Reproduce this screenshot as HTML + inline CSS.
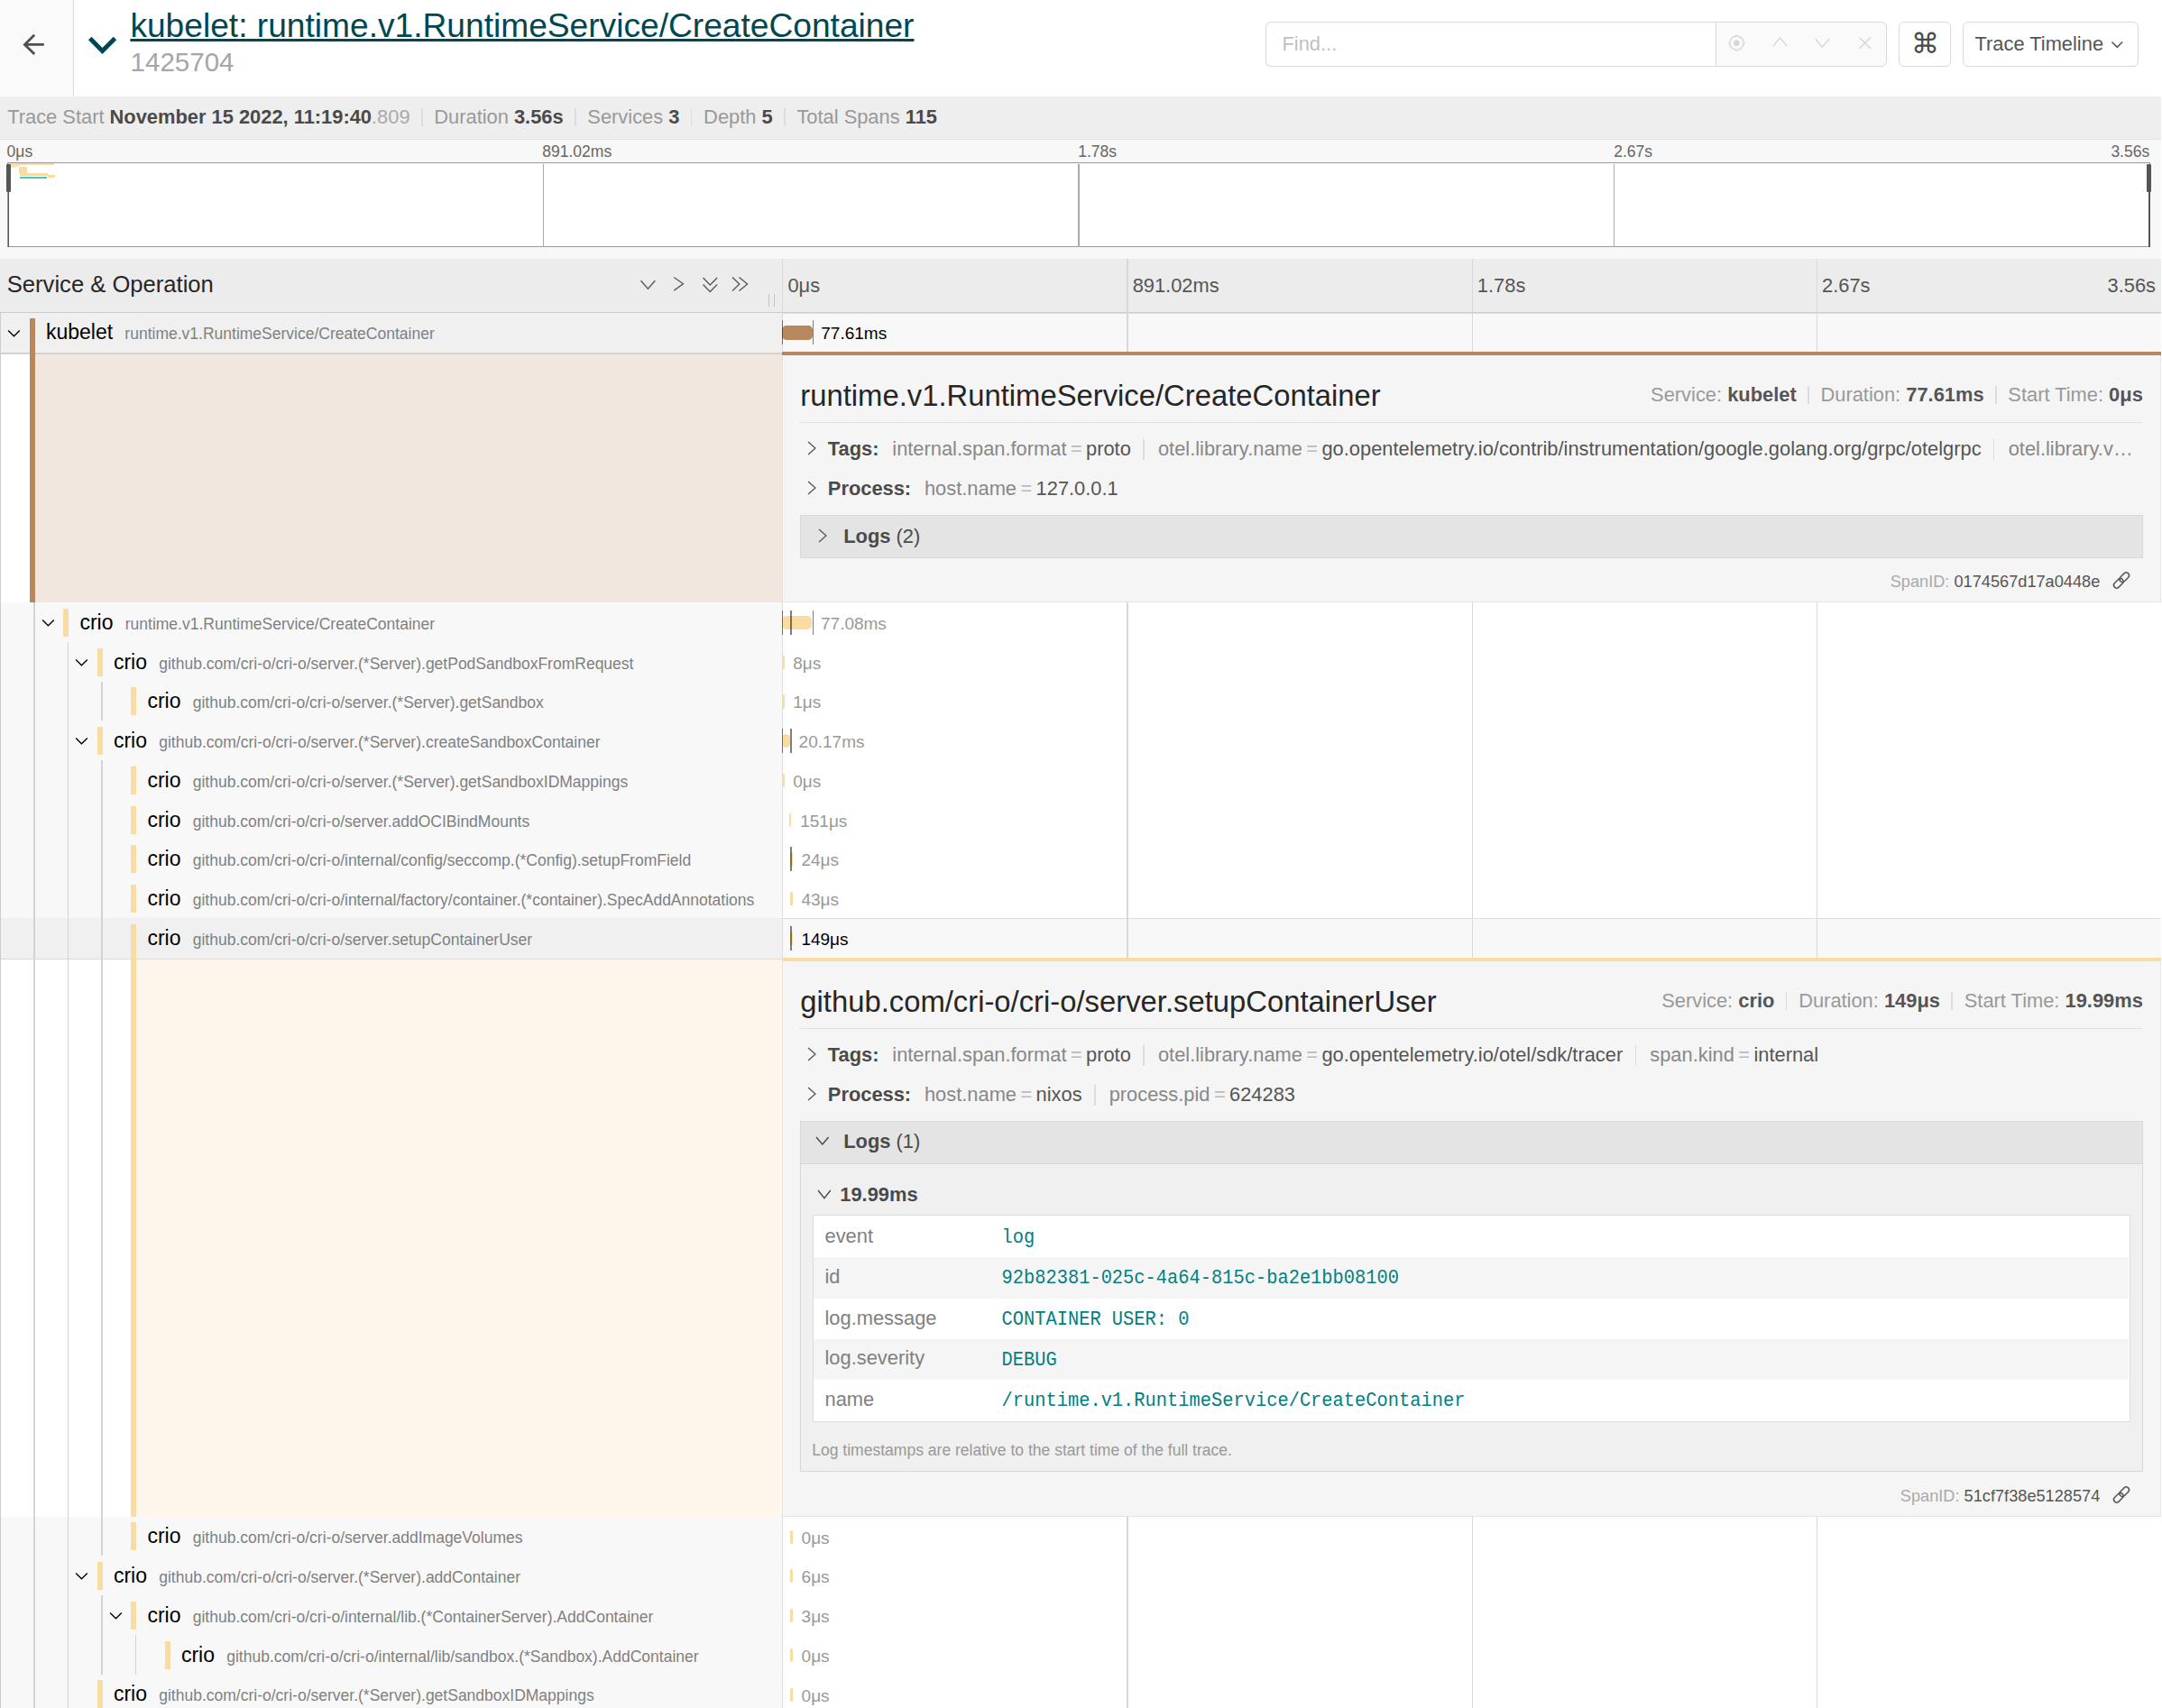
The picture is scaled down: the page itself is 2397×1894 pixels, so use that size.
<!DOCTYPE html><html><head><meta charset="utf-8"><style>
*{margin:0;padding:0;box-sizing:content-box}
html,body{width:2397px;height:1894px;overflow:hidden;background:#fff}
body{position:relative;font-family:"Liberation Sans",sans-serif}
.a{position:absolute}
.t{position:absolute;white-space:nowrap;line-height:normal}
.li{display:inline-block;color:#4a4a4a}
.dv{display:inline-block;width:1.5px;height:0.9em;background:#ddd;vertical-align:middle;position:relative;top:-0.06em;margin:0 12.7px 0 12.5px}
.li .lb{color:#999}
.li b{color:#4a4a4a}
.li .ms{color:#aaa}
.oi{display:inline-block}
.dv2{display:inline-block;width:1.5px;height:0.9em;background:#ddd;vertical-align:middle;position:relative;top:-0.06em;margin:0 12.8px 0 12.5px}
.oi .lb2{color:#999}
.oi b{color:#555}
.sum{color:#888}
.sum .lbl{color:#4a4a4a;margin-right:14.8px}
.sum .si{color:#888}
.sum .sep{display:inline-block;width:1.5px;height:23px;background:#ddd;vertical-align:-5px;margin:0 15.2px 0 13.4px}
.sum .dl{color:#bbb;padding:0 4.4px}
.sum .sv{color:#555}
</style></head><body>
<div class="a" style="left:0px;top:0px;width:2396px;height:107px;background:#fff;"></div>
<div class="a" style="left:0px;top:0px;width:81px;height:107px;background:#fafafa;"></div>
<div class="a" style="left:81px;top:0px;width:1px;height:107px;background:#ddd;"></div>
<svg class="a" style="left:0px;top:0px;" width="81" height="107" viewBox="0 0 81 107"><path d="M38.2 38.7 L27.4 49.4 L38.2 60.1 M27.4 49.4 H48.8" fill="none" stroke="#4f4f4f" stroke-width="2.8" stroke-linejoin="miter"/></svg>
<svg class="a" style="left:90px;top:30px;" width="45" height="40" viewBox="0 0 45 40"><polygon points="7.96,14.2 11.5,10.7 23.5,23.1 35.7,10.7 39.2,14.2 23.5,30" fill="#004750"/></svg>
<span class="t" style="left:144.4px;top:6.82px;font-size:37.15px;color:#004750;font-weight:normal;font-family:'Liberation Sans', sans-serif;text-decoration:underline;">kubelet: runtime.v1.RuntimeService/CreateContainer</span>
<span class="t" style="left:144.6px;top:51.76px;font-size:29.5px;color:#a6a6a6;font-weight:normal;font-family:'Liberation Sans', sans-serif;">1425704</span>
<div class="a" style="left:1403.3px;top:24.2px;width:498.4px;height:49.8px;background:#fff;box-sizing:border-box;border:1px solid #d9d9d9;border-right:none;border-radius:6px 0 0 6px;"></div>
<span class="t" style="left:1421.5px;top:36.08px;font-size:21.875px;color:#bfbfbf;font-weight:normal;font-family:'Liberation Sans', sans-serif;">Find...</span>
<div class="a" style="left:1901.7px;top:24.2px;width:190px;height:49.8px;background:#fafafa;box-sizing:border-box;border:1px solid #d9d9d9;border-radius:0 6px 6px 0;"></div>
<svg class="a" style="left:1902px;top:24px;" width="190" height="50" viewBox="0 0 190 50"><g fill="none" stroke="#d6d6d6" stroke-width="1.4"><circle cx="23.4" cy="23.7" r="7.7"/><path d="M23.4 14.6V16.4 M23.4 31V32.9 M14.3 23.7H16.1 M30.7 23.7H32.6"/><path d="M63.9 27.4 L71.5 17.9 L79.2 27.4"/><path d="M110.6 19.2 L118.3 28.2 L126 19.2"/><path d="M159.3 17.4 L172 30 M172 17.4 L159.3 30"/></g><circle cx="23.4" cy="23.7" r="3.3" fill="#d6d6d6"/></svg>
<div class="a" style="left:2105.3px;top:24.2px;width:57.3px;height:49.8px;background:#fff;box-sizing:border-box;border:1px solid #d9d9d9;border-radius:6px;"></div>
<span class="t" style="left:2134.5px;top:31.04px;font-size:30.5px;color:#4a4a4a;font-weight:normal;font-family:'Liberation Sans', sans-serif;transform:translateX(-50%);">&#8984;</span>
<div class="a" style="left:2175.6px;top:24.2px;width:195.1px;height:49.8px;background:#fff;box-sizing:border-box;border:1px solid #d9d9d9;border-radius:6px;"></div>
<span class="t" style="left:2189.5px;top:35.98px;font-size:21.875px;color:#555;font-weight:normal;font-family:'Liberation Sans', sans-serif;">Trace Timeline</span>
<svg class="a" style="left:2336px;top:37.5px;" width="22" height="22" viewBox="0 0 22 22"><path d="M5.5 8.5 L11.3 14.3 L17.1 8.5" fill="none" stroke="#555" stroke-width="1.6"/></svg>
<div class="a" style="left:0px;top:107px;width:2396px;height:47.5px;background:#eeeeee;"></div>
<div class="a" style="left:0px;top:153.5px;width:2396px;height:1px;background:#e4e4e4;"></div>
<div class="t" style="left:8.2px;top:116.88px;font-size:21.875px;font-family:'Liberation Sans', sans-serif"><span class="li"><span class="lb">Trace Start</span> <b>November 15 2022, 11:19:40</b><span class="ms">.809</span></span><span class="dv"></span><span class="li"><span class="lb">Duration</span> <b>3.56s</b></span><span class="dv"></span><span class="li"><span class="lb">Services</span> <b>3</b></span><span class="dv"></span><span class="li"><span class="lb">Depth</span> <b>5</b></span><span class="dv"></span><span class="li"><span class="lb">Total Spans</span> <b>115</b></span></div>
<div class="a" style="left:0px;top:154.5px;width:2396px;height:132.5px;background:#f8f8f8;"></div>
<span class="t" style="left:7.6px;top:158.10px;font-size:17.5px;color:#666;font-weight:normal;font-family:'Liberation Sans', sans-serif;">0&#956;s</span>
<span class="t" style="left:601.3px;top:158.10px;font-size:17.5px;color:#666;font-weight:normal;font-family:'Liberation Sans', sans-serif;">891.02ms</span>
<span class="t" style="left:1195.2px;top:158.10px;font-size:17.5px;color:#666;font-weight:normal;font-family:'Liberation Sans', sans-serif;">1.78s</span>
<span class="t" style="left:1789.2px;top:158.10px;font-size:17.5px;color:#666;font-weight:normal;font-family:'Liberation Sans', sans-serif;">2.67s</span>
<span class="t" style="right:13.800000000000182px;top:158.10px;font-size:17.5px;color:#666;font-weight:normal;font-family:'Liberation Sans', sans-serif;">3.56s</span>
<div class="a" style="left:8px;top:180.2px;width:2375.6px;height:93.8px;background:#fff;box-sizing:border-box;border:1px solid #999;"></div>
<div class="a" style="left:601.6px;top:181.5px;width:1.5px;height:92px;background:#aaa;"></div>
<div class="a" style="left:1195.1px;top:181.5px;width:1.5px;height:92px;background:#aaa;"></div>
<div class="a" style="left:1788.6px;top:181.5px;width:1.5px;height:92px;background:#aaa;"></div>
<div class="a" style="left:8.7px;top:181.1px;width:51.2px;height:1.6px;background:#f8dca1;"></div>
<div class="a" style="left:12px;top:182.6px;width:9.3px;height:2.8px;background:#f9e3b5;"></div>
<div class="a" style="left:12px;top:185.2px;width:4.5px;height:1px;background:#f9e3b5;"></div>
<div class="a" style="left:21.3px;top:185.2px;width:8.3px;height:7.2px;background:#f8dca1;"></div>
<div class="a" style="left:21.7px;top:192.1px;width:31.1px;height:2.7px;background:#f8dca1;"></div>
<div class="a" style="left:52.8px;top:194.1px;width:8.5px;height:2.9px;background:#f8dca1;"></div>
<div class="a" style="left:21.7px;top:196px;width:30.3px;height:1.9px;background:rgba(23,184,190,0.8);"></div>
<div class="a" style="left:8.6px;top:181.5px;width:1.8px;height:92px;background:#555;"></div>
<div class="a" style="left:7.2px;top:181.5px;width:4.7px;height:31.2px;background:#555;border-radius:1px;"></div>
<div class="a" style="left:2381.9px;top:181.5px;width:1.8px;height:92px;background:#555;"></div>
<div class="a" style="left:2380.2px;top:182px;width:4.6px;height:30.8px;background:#555;border-radius:1px;"></div>
<div class="a" style="left:0px;top:287px;width:2396px;height:59.5px;background:#ececec;"></div>
<div class="a" style="left:0px;top:345.5px;width:2396px;height:1px;background:#ccc;"></div>
<div class="a" style="left:867.2px;top:287px;width:1px;height:59.5px;background:#d8d8d8;"></div>
<span class="t" style="left:7.8px;top:300.95px;font-size:25.6px;color:#262626;font-weight:normal;font-family:'Liberation Sans', sans-serif;">Service &amp; Operation</span>
<svg class="a" style="left:700px;top:297px;" width="140" height="45" viewBox="0 0 140 45"><path d="M10.5 14.3 L18.4 23.2 L26.3 14.3" fill="none" stroke="#5a5a5a" stroke-width="1.4"/><path d="M47.2 10.5 L57.4 17.8 L47.2 25.1" fill="none" stroke="#5a5a5a" stroke-width="1.4"/><path d="M79.5 11 L87.3 19 L95.1 11 M79.5 18.6 L87.3 26.6 L95.1 18.6" fill="none" stroke="#5a5a5a" stroke-width="1.4"/><path d="M112 10.5 L119.8 18 L112 25.5 M119.5 10.5 L128.6 18 L119.5 25.5" fill="none" stroke="#5a5a5a" stroke-width="1.4"/><path d="M152.5 29.5 V42.8 M158.4 29.5 V42.8" stroke="#bbb" stroke-width="1"/></svg>
<div class="a" style="left:852px;top:326.3px;width:1px;height:13.5px;background:#c4c4c4;"></div>
<div class="a" style="left:858px;top:326.3px;width:1px;height:13.5px;background:#c4c4c4;"></div>
<div class="a" style="left:1249.4px;top:287px;width:1.5px;height:59.5px;background:#d8d8d8;"></div>
<div class="a" style="left:1631.6px;top:287px;width:1.5px;height:59.5px;background:#d8d8d8;"></div>
<div class="a" style="left:2013.8px;top:287px;width:1.5px;height:59.5px;background:#d8d8d8;"></div>
<span class="t" style="left:873.45px;top:304.38px;font-size:21.875px;color:#555;font-weight:normal;font-family:'Liberation Sans', sans-serif;">0&#956;s</span>
<span class="t" style="left:1255.65px;top:304.38px;font-size:21.875px;color:#555;font-weight:normal;font-family:'Liberation Sans', sans-serif;">891.02ms</span>
<span class="t" style="left:1637.85px;top:304.38px;font-size:21.875px;color:#555;font-weight:normal;font-family:'Liberation Sans', sans-serif;">1.78s</span>
<span class="t" style="left:2020.05px;top:304.38px;font-size:21.875px;color:#555;font-weight:normal;font-family:'Liberation Sans', sans-serif;">2.67s</span>
<span class="t" style="right:7px;top:304.38px;font-size:21.875px;color:#555;font-weight:normal;font-family:'Liberation Sans', sans-serif;">3.56s</span>
<div class="a" style="left:0px;top:346.5px;width:867.2px;height:43.75px;background:#f0f0f0;"></div>
<div class="a" style="left:867.2px;top:346.5px;width:1528.8px;height:43.75px;background:#f8f8f8;"></div>
<div class="a" style="left:867.2px;top:346.5px;width:1528.8px;height:1px;background:#ddd;"></div>
<div class="a" style="left:0px;top:346.5px;width:1px;height:43.75px;background:#ccc;"></div>
<svg class="a" style="left:0.0px;top:346.5px;" width="30" height="40" viewBox="0 0 30 40"><path d="M9.1 19.4 L15.45 25.8 L21.8 19.4" fill="none" stroke="#000" stroke-width="1.35"/></svg>
<div class="a" style="left:32.9px;top:353.3px;width:6px;height:36.95px;background:#b7885e;"></div>
<span class="t" style="left:50.90px;top:355.34px;font-size:23px;color:#000;font-family:'Liberation Sans', sans-serif">kubelet<span style="font-size:17.5px;color:#808080;margin-left:13.3px">runtime.v1.RuntimeService/CreateContainer</span></span>
<div class="a" style="left:1249.4px;top:346.5px;width:1.5px;height:43.75px;background:#d8d8d8;"></div>
<div class="a" style="left:1631.6px;top:346.5px;width:1.5px;height:43.75px;background:#d8d8d8;"></div>
<div class="a" style="left:2013.8px;top:346.5px;width:1.5px;height:43.75px;background:#d8d8d8;"></div>
<div class="a" style="left:867.2px;top:346.5px;width:1px;height:43.75px;background:#ddd;"></div>
<div class="a" style="left:867.2px;top:361.4px;width:33.59999999999991px;height:15.2px;background:#b7885e;border-radius:4.7px;"></div>
<div class="a" style="left:866.9px;top:355.1px;width:1.5625px;height:27px;background:rgba(0,0,0,0.5);"></div>
<div class="a" style="left:900.6px;top:355.1px;width:1.5625px;height:27px;background:rgba(0,0,0,0.5);"></div>
<span class="t" style="left:910.3px;top:359.42px;font-size:19px;color:#000;font-weight:normal;font-family:'Liberation Sans', sans-serif;">77.61ms</span>
<div class="a" style="left:0px;top:390.25px;width:867.2px;height:277.75px;background:#fff;"></div>
<div class="a" style="left:32.9px;top:390.25px;width:834.3000000000001px;height:277.75px;background:#f1e7df;"></div>
<div class="a" style="left:0px;top:390.25px;width:867.2px;height:1.3px;background:#f0f0f0;"></div>
<div class="a" style="left:0px;top:391.45px;width:32.9px;height:1.3px;background:rgba(0,0,0,0.15);"></div>
<div class="a" style="left:38.9px;top:391.45px;width:828.3000000000001px;height:1.3px;background:rgba(0,0,0,0.11);"></div>
<div class="a" style="left:0px;top:390.25px;width:1px;height:277.75px;background:#ccc;"></div>
<div class="a" style="left:32.9px;top:390.25px;width:6px;height:277.75px;background:#b7885e;"></div>
<div class="a" style="left:1249.4px;top:390.25px;width:1.5px;height:277.75px;background:#d8d8d8;"></div>
<div class="a" style="left:1631.6px;top:390.25px;width:1.5px;height:277.75px;background:#d8d8d8;"></div>
<div class="a" style="left:2013.8px;top:390.25px;width:1.5px;height:277.75px;background:#d8d8d8;"></div>
<div class="a" style="left:867.2px;top:389.9px;width:1528.8px;height:278.1px;background:#f5f5f5;box-sizing:border-box;border:1px solid #e4e4e4;border-top:none;"></div>
<div class="a" style="left:867.2px;top:389.9px;width:1528.8px;height:4.2px;background:#b7885e;"></div>
<span class="t" style="left:887.3px;top:420.02px;font-size:32.8px;color:#262626;font-weight:normal;font-family:'Liberation Sans', sans-serif;">runtime.v1.RuntimeService/CreateContainer</span>
<div class="t ov" style="right:21.199999999999818px;top:425.07px;font-size:21.875px;font-family:'Liberation Sans', sans-serif"><span class="oi"><span class="lb2">Service:</span> <b>kubelet</b></span><span class="dv2"></span><span class="oi"><span class="lb2">Duration:</span> <b>77.61ms</b></span><span class="dv2"></span><span class="oi last"><span class="lb2">Start Time:</span> <b>0&#956;s</b></span></div>
<div class="a" style="left:887.1px;top:468.29999999999995px;width:1488.2000000000003px;height:1px;background:#e0e0e0;"></div>
<svg class="a" style="left:894px;top:488.4px;" width="12" height="18" viewBox="0 0 12 18"><path d="M2 2 L10 9.0 L2 16" fill="none" stroke="#555" stroke-width="1.3"/></svg>
<div class="t sum" style="left:917.8px;top:485.07px;font-size:21.875px;font-family:'Liberation Sans', sans-serif;width:1457.5000000000002px;overflow:hidden;text-overflow:ellipsis;"><b class="lbl">Tags:</b><span class="si">internal.span.format<span class="dl">=</span><span class="sv">proto</span></span><span class="sep"></span><span class="si">otel.library.name<span class="dl">=</span><span class="sv">go.opentelemetry.io/contrib/instrumentation/google.golang.org/grpc/otelgrpc</span></span><span class="sep"></span><span class="si">otel.library.version<span class="dl">=</span><span class="sv">0.35.0</span></span><span class="sep"></span><span class="si">rpc.method<span class="dl">=</span><span class="sv">CreateContainer</span></span></div>
<svg class="a" style="left:894px;top:532.3px;" width="12" height="18" viewBox="0 0 12 18"><path d="M2 2 L10 9.0 L2 16" fill="none" stroke="#555" stroke-width="1.3"/></svg>
<div class="t sum" style="left:917.8px;top:528.88px;font-size:21.875px;font-family:'Liberation Sans', sans-serif;"><b class="lbl">Process:</b><span class="si">host.name<span class="dl">=</span><span class="sv">127.0.0.1</span></span></div>
<div class="a" style="left:887.1px;top:571.4px;width:1489.4px;height:47.8px;background:#e4e4e4;box-sizing:border-box;border:1px solid #d8d8d8;"></div>
<svg class="a" style="left:906px;top:584.9px;" width="12" height="18" viewBox="0 0 12 18"><path d="M2 2 L10 9.0 L2 16" fill="none" stroke="#555" stroke-width="1.3"/></svg>
<span class="t" style="left:935.2px;top:582.07px;font-size:21.875px;color:#4a4a4a;font-family:'Liberation Sans', sans-serif"><b>Logs</b> (2)</span>
<span class="t" style="right:68.69999999999982px;top:635.26px;font-size:18.2px;font-family:'Liberation Sans', sans-serif;color:#aaa">SpanID: <span style="color:#555">0174567d17a0448e</span></span>
<svg class="a" style="left:2338px;top:629.0px;" width="28" height="28" viewBox="0 0 28 28"><g fill="none" stroke="#555" stroke-width="1.5"><rect x="4.7" y="14.6" width="12.2" height="6.4" rx="3.2" transform="rotate(-45 10.8 17.8)"/><rect x="11.1" y="8.0" width="12.2" height="6.4" rx="3.2" transform="rotate(-45 17.2 11.2)"/></g></svg>
<div class="a" style="left:0px;top:668px;width:867.2px;height:43.75px;background:#f8f8f8;"></div>
<div class="a" style="left:867.2px;top:668px;width:1528.8px;height:43.75px;background:#fff;"></div>
<div class="a" style="left:0px;top:668px;width:1px;height:43.75px;background:#ccc;"></div>
<div class="a" style="left:37.150000000000006px;top:668px;width:1.5625px;height:43.75px;background:#d3d3d3"></div>
<svg class="a" style="left:37.5px;top:668px;" width="30" height="40" viewBox="0 0 30 40"><path d="M9.1 19.4 L15.45 25.8 L21.8 19.4" fill="none" stroke="#000" stroke-width="1.35"/></svg>
<div class="a" style="left:70.35px;top:674.8px;width:6px;height:31px;background:#f8dca1;"></div>
<span class="t" style="left:88.40px;top:676.84px;font-size:23px;color:#000;font-family:'Liberation Sans', sans-serif">crio<span style="font-size:17.5px;color:#808080;margin-left:13.3px">runtime.v1.RuntimeService/CreateContainer</span></span>
<div class="a" style="left:1249.4px;top:668px;width:1.5px;height:43.75px;background:#d8d8d8;"></div>
<div class="a" style="left:1631.6px;top:668px;width:1.5px;height:43.75px;background:#d8d8d8;"></div>
<div class="a" style="left:2013.8px;top:668px;width:1.5px;height:43.75px;background:#d8d8d8;"></div>
<div class="a" style="left:867.2px;top:668px;width:1px;height:43.75px;background:#ddd;"></div>
<div class="a" style="left:867.2px;top:682.9px;width:33.09999999999991px;height:15.2px;background:#f8dca1;border-radius:4.7px;"></div>
<div class="a" style="left:866.9px;top:676.6px;width:1.5625px;height:27px;background:rgba(0,0,0,0.5);"></div>
<div class="a" style="left:876.4px;top:676.6px;width:1.5625px;height:27px;background:rgba(0,0,0,0.5);"></div>
<div class="a" style="left:900.8px;top:676.6px;width:1.5625px;height:27px;background:rgba(0,0,0,0.5);"></div>
<span class="t" style="left:910.0px;top:680.92px;font-size:19px;color:#999;font-weight:normal;font-family:'Liberation Sans', sans-serif;">77.08ms</span>
<div class="a" style="left:0px;top:711.75px;width:867.2px;height:43.75px;background:#f8f8f8;"></div>
<div class="a" style="left:867.2px;top:711.75px;width:1528.8px;height:43.75px;background:#fff;"></div>
<div class="a" style="left:0px;top:711.75px;width:1px;height:43.75px;background:#ccc;"></div>
<div class="a" style="left:37.150000000000006px;top:711.75px;width:1.5625px;height:43.75px;background:#d3d3d3"></div>
<div class="a" style="left:74.60000000000001px;top:711.75px;width:1.5625px;height:43.75px;background:#d3d3d3"></div>
<svg class="a" style="left:75.0px;top:711.75px;" width="30" height="40" viewBox="0 0 30 40"><path d="M9.1 19.4 L15.45 25.8 L21.8 19.4" fill="none" stroke="#000" stroke-width="1.35"/></svg>
<div class="a" style="left:107.80000000000001px;top:718.55px;width:6px;height:31px;background:#f8dca1;"></div>
<span class="t" style="left:125.90px;top:720.59px;font-size:23px;color:#000;font-family:'Liberation Sans', sans-serif">crio<span style="font-size:17.5px;color:#808080;margin-left:13.3px">github.com/cri-o/cri-o/server.(*Server).getPodSandboxFromRequest</span></span>
<div class="a" style="left:1249.4px;top:711.75px;width:1.5px;height:43.75px;background:#d8d8d8;"></div>
<div class="a" style="left:1631.6px;top:711.75px;width:1.5px;height:43.75px;background:#d8d8d8;"></div>
<div class="a" style="left:2013.8px;top:711.75px;width:1.5px;height:43.75px;background:#d8d8d8;"></div>
<div class="a" style="left:867.2px;top:711.75px;width:1px;height:43.75px;background:#ddd;"></div>
<div class="a" style="left:867.2px;top:726.65px;width:2.6px;height:15.2px;background:#f8dca1;border-radius:1.3px;"></div>
<span class="t" style="left:879.3px;top:724.67px;font-size:19px;color:#999;font-weight:normal;font-family:'Liberation Sans', sans-serif;">8&#956;s</span>
<div class="a" style="left:0px;top:755.5px;width:867.2px;height:43.75px;background:#f8f8f8;"></div>
<div class="a" style="left:867.2px;top:755.5px;width:1528.8px;height:43.75px;background:#fff;"></div>
<div class="a" style="left:0px;top:755.5px;width:1px;height:43.75px;background:#ccc;"></div>
<div class="a" style="left:37.150000000000006px;top:755.5px;width:1.5625px;height:43.75px;background:#d3d3d3"></div>
<div class="a" style="left:74.60000000000001px;top:755.5px;width:1.5625px;height:43.75px;background:#d3d3d3"></div>
<div class="a" style="left:112.05000000000001px;top:755.5px;width:1.5625px;height:43.75px;background:#d3d3d3"></div>
<div class="a" style="left:145.25px;top:762.3px;width:6px;height:31px;background:#f8dca1;"></div>
<span class="t" style="left:163.40px;top:764.34px;font-size:23px;color:#000;font-family:'Liberation Sans', sans-serif">crio<span style="font-size:17.5px;color:#808080;margin-left:13.3px">github.com/cri-o/cri-o/server.(*Server).getSandbox</span></span>
<div class="a" style="left:1249.4px;top:755.5px;width:1.5px;height:43.75px;background:#d8d8d8;"></div>
<div class="a" style="left:1631.6px;top:755.5px;width:1.5px;height:43.75px;background:#d8d8d8;"></div>
<div class="a" style="left:2013.8px;top:755.5px;width:1.5px;height:43.75px;background:#d8d8d8;"></div>
<div class="a" style="left:867.2px;top:755.5px;width:1px;height:43.75px;background:#ddd;"></div>
<div class="a" style="left:867.2px;top:770.4px;width:2.6px;height:15.2px;background:#f8dca1;border-radius:1.3px;"></div>
<span class="t" style="left:879.3px;top:768.42px;font-size:19px;color:#999;font-weight:normal;font-family:'Liberation Sans', sans-serif;">1&#956;s</span>
<div class="a" style="left:0px;top:799.25px;width:867.2px;height:43.75px;background:#f8f8f8;"></div>
<div class="a" style="left:867.2px;top:799.25px;width:1528.8px;height:43.75px;background:#fff;"></div>
<div class="a" style="left:0px;top:799.25px;width:1px;height:43.75px;background:#ccc;"></div>
<div class="a" style="left:37.150000000000006px;top:799.25px;width:1.5625px;height:43.75px;background:#d3d3d3"></div>
<div class="a" style="left:74.60000000000001px;top:799.25px;width:1.5625px;height:43.75px;background:#d3d3d3"></div>
<svg class="a" style="left:75.0px;top:799.25px;" width="30" height="40" viewBox="0 0 30 40"><path d="M9.1 19.4 L15.45 25.8 L21.8 19.4" fill="none" stroke="#000" stroke-width="1.35"/></svg>
<div class="a" style="left:107.80000000000001px;top:806.05px;width:6px;height:31px;background:#f8dca1;"></div>
<span class="t" style="left:125.90px;top:808.09px;font-size:23px;color:#000;font-family:'Liberation Sans', sans-serif">crio<span style="font-size:17.5px;color:#808080;margin-left:13.3px">github.com/cri-o/cri-o/server.(*Server).createSandboxContainer</span></span>
<div class="a" style="left:1249.4px;top:799.25px;width:1.5px;height:43.75px;background:#d8d8d8;"></div>
<div class="a" style="left:1631.6px;top:799.25px;width:1.5px;height:43.75px;background:#d8d8d8;"></div>
<div class="a" style="left:2013.8px;top:799.25px;width:1.5px;height:43.75px;background:#d8d8d8;"></div>
<div class="a" style="left:867.2px;top:799.25px;width:1px;height:43.75px;background:#ddd;"></div>
<div class="a" style="left:867.2px;top:814.15px;width:8.799999999999955px;height:15.2px;background:#f8dca1;border-radius:4.399999999999977px;"></div>
<div class="a" style="left:866.9px;top:807.85px;width:1.5625px;height:27px;background:rgba(0,0,0,0.5);"></div>
<div class="a" style="left:876.4px;top:807.85px;width:1.5625px;height:27px;background:rgba(0,0,0,0.5);"></div>
<span class="t" style="left:885.6px;top:812.17px;font-size:19px;color:#999;font-weight:normal;font-family:'Liberation Sans', sans-serif;">20.17ms</span>
<div class="a" style="left:0px;top:843.0px;width:867.2px;height:43.75px;background:#f8f8f8;"></div>
<div class="a" style="left:867.2px;top:843.0px;width:1528.8px;height:43.75px;background:#fff;"></div>
<div class="a" style="left:0px;top:843.0px;width:1px;height:43.75px;background:#ccc;"></div>
<div class="a" style="left:37.150000000000006px;top:843.0px;width:1.5625px;height:43.75px;background:#d3d3d3"></div>
<div class="a" style="left:74.60000000000001px;top:843.0px;width:1.5625px;height:43.75px;background:#d3d3d3"></div>
<div class="a" style="left:112.05000000000001px;top:843.0px;width:1.5625px;height:43.75px;background:#d3d3d3"></div>
<div class="a" style="left:145.25px;top:849.8px;width:6px;height:31px;background:#f8dca1;"></div>
<span class="t" style="left:163.40px;top:851.84px;font-size:23px;color:#000;font-family:'Liberation Sans', sans-serif">crio<span style="font-size:17.5px;color:#808080;margin-left:13.3px">github.com/cri-o/cri-o/server.(*Server).getSandboxIDMappings</span></span>
<div class="a" style="left:1249.4px;top:843.0px;width:1.5px;height:43.75px;background:#d8d8d8;"></div>
<div class="a" style="left:1631.6px;top:843.0px;width:1.5px;height:43.75px;background:#d8d8d8;"></div>
<div class="a" style="left:2013.8px;top:843.0px;width:1.5px;height:43.75px;background:#d8d8d8;"></div>
<div class="a" style="left:867.2px;top:843.0px;width:1px;height:43.75px;background:#ddd;"></div>
<div class="a" style="left:867.2px;top:857.9px;width:2.6px;height:15.2px;background:#f8dca1;border-radius:1.3px;"></div>
<span class="t" style="left:879.3px;top:855.92px;font-size:19px;color:#999;font-weight:normal;font-family:'Liberation Sans', sans-serif;">0&#956;s</span>
<div class="a" style="left:0px;top:886.75px;width:867.2px;height:43.75px;background:#f8f8f8;"></div>
<div class="a" style="left:867.2px;top:886.75px;width:1528.8px;height:43.75px;background:#fff;"></div>
<div class="a" style="left:0px;top:886.75px;width:1px;height:43.75px;background:#ccc;"></div>
<div class="a" style="left:37.150000000000006px;top:886.75px;width:1.5625px;height:43.75px;background:#d3d3d3"></div>
<div class="a" style="left:74.60000000000001px;top:886.75px;width:1.5625px;height:43.75px;background:#d3d3d3"></div>
<div class="a" style="left:112.05000000000001px;top:886.75px;width:1.5625px;height:43.75px;background:#d3d3d3"></div>
<div class="a" style="left:145.25px;top:893.55px;width:6px;height:31px;background:#f8dca1;"></div>
<span class="t" style="left:163.40px;top:895.59px;font-size:23px;color:#000;font-family:'Liberation Sans', sans-serif">crio<span style="font-size:17.5px;color:#808080;margin-left:13.3px">github.com/cri-o/cri-o/server.addOCIBindMounts</span></span>
<div class="a" style="left:1249.4px;top:886.75px;width:1.5px;height:43.75px;background:#d8d8d8;"></div>
<div class="a" style="left:1631.6px;top:886.75px;width:1.5px;height:43.75px;background:#d8d8d8;"></div>
<div class="a" style="left:2013.8px;top:886.75px;width:1.5px;height:43.75px;background:#d8d8d8;"></div>
<div class="a" style="left:867.2px;top:886.75px;width:1px;height:43.75px;background:#ddd;"></div>
<div class="a" style="left:874.9px;top:901.65px;width:2.6px;height:15.2px;background:#f8dca1;border-radius:1.3px;"></div>
<span class="t" style="left:887.2px;top:899.67px;font-size:19px;color:#999;font-weight:normal;font-family:'Liberation Sans', sans-serif;">151&#956;s</span>
<div class="a" style="left:0px;top:930.5px;width:867.2px;height:43.75px;background:#f8f8f8;"></div>
<div class="a" style="left:867.2px;top:930.5px;width:1528.8px;height:43.75px;background:#fff;"></div>
<div class="a" style="left:0px;top:930.5px;width:1px;height:43.75px;background:#ccc;"></div>
<div class="a" style="left:37.150000000000006px;top:930.5px;width:1.5625px;height:43.75px;background:#d3d3d3"></div>
<div class="a" style="left:74.60000000000001px;top:930.5px;width:1.5625px;height:43.75px;background:#d3d3d3"></div>
<div class="a" style="left:112.05000000000001px;top:930.5px;width:1.5625px;height:43.75px;background:#d3d3d3"></div>
<div class="a" style="left:145.25px;top:937.3px;width:6px;height:31px;background:#f8dca1;"></div>
<span class="t" style="left:163.40px;top:939.34px;font-size:23px;color:#000;font-family:'Liberation Sans', sans-serif">crio<span style="font-size:17.5px;color:#808080;margin-left:13.3px">github.com/cri-o/cri-o/internal/config/seccomp.(*Config).setupFromField</span></span>
<div class="a" style="left:1249.4px;top:930.5px;width:1.5px;height:43.75px;background:#d8d8d8;"></div>
<div class="a" style="left:1631.6px;top:930.5px;width:1.5px;height:43.75px;background:#d8d8d8;"></div>
<div class="a" style="left:2013.8px;top:930.5px;width:1.5px;height:43.75px;background:#d8d8d8;"></div>
<div class="a" style="left:867.2px;top:930.5px;width:1px;height:43.75px;background:#ddd;"></div>
<div class="a" style="left:876px;top:945.4px;width:2.6px;height:15.2px;background:#f8dca1;border-radius:1.3px;"></div>
<div class="a" style="left:876.4px;top:939.1px;width:1.5625px;height:27px;background:rgba(0,0,0,0.5);"></div>
<span class="t" style="left:888.4px;top:943.42px;font-size:19px;color:#999;font-weight:normal;font-family:'Liberation Sans', sans-serif;">24&#956;s</span>
<div class="a" style="left:0px;top:974.25px;width:867.2px;height:43.75px;background:#f8f8f8;"></div>
<div class="a" style="left:867.2px;top:974.25px;width:1528.8px;height:43.75px;background:#fff;"></div>
<div class="a" style="left:0px;top:974.25px;width:1px;height:43.75px;background:#ccc;"></div>
<div class="a" style="left:37.150000000000006px;top:974.25px;width:1.5625px;height:43.75px;background:#d3d3d3"></div>
<div class="a" style="left:74.60000000000001px;top:974.25px;width:1.5625px;height:43.75px;background:#d3d3d3"></div>
<div class="a" style="left:112.05000000000001px;top:974.25px;width:1.5625px;height:43.75px;background:#d3d3d3"></div>
<div class="a" style="left:145.25px;top:981.05px;width:6px;height:31px;background:#f8dca1;"></div>
<span class="t" style="left:163.40px;top:983.09px;font-size:23px;color:#000;font-family:'Liberation Sans', sans-serif">crio<span style="font-size:17.5px;color:#808080;margin-left:13.3px">github.com/cri-o/cri-o/internal/factory/container.(*container).SpecAddAnnotations</span></span>
<div class="a" style="left:1249.4px;top:974.25px;width:1.5px;height:43.75px;background:#d8d8d8;"></div>
<div class="a" style="left:1631.6px;top:974.25px;width:1.5px;height:43.75px;background:#d8d8d8;"></div>
<div class="a" style="left:2013.8px;top:974.25px;width:1.5px;height:43.75px;background:#d8d8d8;"></div>
<div class="a" style="left:867.2px;top:974.25px;width:1px;height:43.75px;background:#ddd;"></div>
<div class="a" style="left:876px;top:989.15px;width:2.6px;height:15.2px;background:#f8dca1;border-radius:1.3px;"></div>
<span class="t" style="left:888.4px;top:987.17px;font-size:19px;color:#999;font-weight:normal;font-family:'Liberation Sans', sans-serif;">43&#956;s</span>
<div class="a" style="left:0px;top:1018.0px;width:867.2px;height:43.75px;background:#f0f0f0;"></div>
<div class="a" style="left:867.2px;top:1018.0px;width:1528.8px;height:43.75px;background:#f8f8f8;"></div>
<div class="a" style="left:867.2px;top:1018.0px;width:1528.8px;height:1px;background:#ddd;"></div>
<div class="a" style="left:0px;top:1018.0px;width:1px;height:43.75px;background:#ccc;"></div>
<div class="a" style="left:37.150000000000006px;top:1018.0px;width:1.5625px;height:43.75px;background:#d3d3d3"></div>
<div class="a" style="left:74.60000000000001px;top:1018.0px;width:1.5625px;height:43.75px;background:#d3d3d3"></div>
<div class="a" style="left:112.05000000000001px;top:1018.0px;width:1.5625px;height:43.75px;background:#d3d3d3"></div>
<div class="a" style="left:145.25px;top:1024.8px;width:6px;height:36.95px;background:#f8dca1;"></div>
<span class="t" style="left:163.40px;top:1026.84px;font-size:23px;color:#000;font-family:'Liberation Sans', sans-serif">crio<span style="font-size:17.5px;color:#808080;margin-left:13.3px">github.com/cri-o/cri-o/server.setupContainerUser</span></span>
<div class="a" style="left:1249.4px;top:1018.0px;width:1.5px;height:43.75px;background:#d8d8d8;"></div>
<div class="a" style="left:1631.6px;top:1018.0px;width:1.5px;height:43.75px;background:#d8d8d8;"></div>
<div class="a" style="left:2013.8px;top:1018.0px;width:1.5px;height:43.75px;background:#d8d8d8;"></div>
<div class="a" style="left:867.2px;top:1018.0px;width:1px;height:43.75px;background:#ddd;"></div>
<div class="a" style="left:876px;top:1032.9px;width:2.6px;height:15.2px;background:#f8dca1;border-radius:1.3px;"></div>
<div class="a" style="left:876.4px;top:1026.6px;width:1.5625px;height:27px;background:rgba(0,0,0,0.5);"></div>
<span class="t" style="left:888.4px;top:1030.92px;font-size:19px;color:#000;font-weight:normal;font-family:'Liberation Sans', sans-serif;">149&#956;s</span>
<div class="a" style="left:0px;top:1061.75px;width:867.2px;height:619.8499999999999px;background:#fff;"></div>
<div class="a" style="left:145.25px;top:1061.75px;width:721.95px;height:619.8499999999999px;background:#fef6ea;"></div>
<div class="a" style="left:0px;top:1061.75px;width:867.2px;height:1.3px;background:#f0f0f0;"></div>
<div class="a" style="left:0px;top:1062.95px;width:145.25px;height:1.3px;background:rgba(0,0,0,0.15);"></div>
<div class="a" style="left:151.25px;top:1062.95px;width:715.95px;height:1.3px;background:rgba(0,0,0,0.11);"></div>
<div class="a" style="left:0px;top:1061.75px;width:1px;height:619.8499999999999px;background:#ccc;"></div>
<div class="a" style="left:37.150000000000006px;top:1061.75px;width:1.5625px;height:619.8499999999999px;background:#d3d3d3"></div>
<div class="a" style="left:74.60000000000001px;top:1061.75px;width:1.5625px;height:619.8499999999999px;background:#d3d3d3"></div>
<div class="a" style="left:112.05000000000001px;top:1061.75px;width:1.5625px;height:619.8499999999999px;background:#d3d3d3"></div>
<div class="a" style="left:145.25px;top:1061.75px;width:6px;height:619.8499999999999px;background:#f8dca1;"></div>
<div class="a" style="left:1249.4px;top:1061.75px;width:1.5px;height:619.8499999999999px;background:#d8d8d8;"></div>
<div class="a" style="left:1631.6px;top:1061.75px;width:1.5px;height:619.8499999999999px;background:#d8d8d8;"></div>
<div class="a" style="left:2013.8px;top:1061.75px;width:1.5px;height:619.8499999999999px;background:#d8d8d8;"></div>
<div class="a" style="left:867.2px;top:1061.9px;width:1528.8px;height:619.6999999999998px;background:#f5f5f5;box-sizing:border-box;border:1px solid #e4e4e4;border-top:none;"></div>
<div class="a" style="left:867.2px;top:1061.9px;width:1528.8px;height:4.2px;background:#f8dca1;"></div>
<span class="t" style="left:887.3px;top:1092.02px;font-size:32.8px;color:#262626;font-weight:normal;font-family:'Liberation Sans', sans-serif;">github.com/cri-o/cri-o/server.setupContainerUser</span>
<div class="t ov" style="right:21.199999999999818px;top:1097.08px;font-size:21.875px;font-family:'Liberation Sans', sans-serif"><span class="oi"><span class="lb2">Service:</span> <b>crio</b></span><span class="dv2"></span><span class="oi"><span class="lb2">Duration:</span> <b>149&#956;s</b></span><span class="dv2"></span><span class="oi last"><span class="lb2">Start Time:</span> <b>19.99ms</b></span></div>
<div class="a" style="left:887.1px;top:1140.3000000000002px;width:1488.2000000000003px;height:1px;background:#e0e0e0;"></div>
<svg class="a" style="left:894px;top:1160.4px;" width="12" height="18" viewBox="0 0 12 18"><path d="M2 2 L10 9.0 L2 16" fill="none" stroke="#555" stroke-width="1.3"/></svg>
<div class="t sum" style="left:917.8px;top:1157.08px;font-size:21.875px;font-family:'Liberation Sans', sans-serif;"><b class="lbl">Tags:</b><span class="si">internal.span.format<span class="dl">=</span><span class="sv">proto</span></span><span class="sep"></span><span class="si">otel.library.name<span class="dl">=</span><span class="sv">go.opentelemetry.io/otel/sdk/tracer</span></span><span class="sep"></span><span class="si">span.kind<span class="dl">=</span><span class="sv">internal</span></span></div>
<svg class="a" style="left:894px;top:1204.3000000000002px;" width="12" height="18" viewBox="0 0 12 18"><path d="M2 2 L10 9.0 L2 16" fill="none" stroke="#555" stroke-width="1.3"/></svg>
<div class="t sum" style="left:917.8px;top:1200.88px;font-size:21.875px;font-family:'Liberation Sans', sans-serif;"><b class="lbl">Process:</b><span class="si">host.name<span class="dl">=</span><span class="sv">nixos</span></span><span class="sep"></span><span class="si">process.pid<span class="dl">=</span><span class="sv">624283</span></span></div>
<span class="t" style="right:68.69999999999982px;top:1648.86px;font-size:18.2px;font-family:'Liberation Sans', sans-serif;color:#aaa">SpanID: <span style="color:#555">51cf7f38e5128574</span></span>
<svg class="a" style="left:2338px;top:1642.6px;" width="28" height="28" viewBox="0 0 28 28"><g fill="none" stroke="#555" stroke-width="1.5"><rect x="4.7" y="14.6" width="12.2" height="6.4" rx="3.2" transform="rotate(-45 10.8 17.8)"/><rect x="11.1" y="8.0" width="12.2" height="6.4" rx="3.2" transform="rotate(-45 17.2 11.2)"/></g></svg>
<div class="a" style="left:887.1px;top:1243.4px;width:1489.4px;height:388.5px;background:#f0f0f0;box-sizing:border-box;border:1px solid #d8d8d8;"></div>
<div class="a" style="left:887.1px;top:1243.4px;width:1489.4px;height:47.899999999999864px;background:#e4e4e4;box-sizing:border-box;border:1px solid #d8d8d8;"></div>
<svg class="a" style="left:903.2px;top:1259.4px;" width="17.6" height="11.9" viewBox="0 0 17.6 11.9"><path d="M2 2 L8.8 9.9 L15.6 2" fill="none" stroke="#444" stroke-width="1.4"/></svg>
<span class="t" style="left:935.2px;top:1252.88px;font-size:21.875px;color:#4a4a4a;font-family:'Liberation Sans', sans-serif"><b>Logs</b> (1)</span>
<svg class="a" style="left:905.2px;top:1317.7px;" width="17.8" height="12.7" viewBox="0 0 17.8 12.7"><path d="M2 2 L8.9 10.7 L15.8 2" fill="none" stroke="#444" stroke-width="1.4"/></svg>
<span class="t" style="left:931.3px;top:1311.67px;font-size:21.875px;color:#4a4a4a;font-weight:normal;font-family:'Liberation Sans', sans-serif;"><b>19.99ms</b></span>
<div class="a" style="left:901.4px;top:1347.4px;width:1460.5px;height:229.79999999999995px;background:#fff;box-sizing:border-box;border:1px solid #dcdcdc;"></div>
<span class="t" style="left:914.5px;top:1357.88px;font-size:21.875px;color:#808080;font-weight:normal;font-family:'Liberation Sans', sans-serif;">event</span>
<span class="t" style="left:1110.5px;top:1361.02px;font-size:20.4px;color:#008080;font-weight:normal;font-family:'Liberation Mono', monospace;transform:scaleY(1.09);transform-origin:0 16.98px;">log</span>
<div class="a" style="left:902.4px;top:1393.9px;width:1458.0px;height:46.09999999999991px;background:#f5f5f5;"></div>
<span class="t" style="left:914.5px;top:1402.58px;font-size:21.875px;color:#808080;font-weight:normal;font-family:'Liberation Sans', sans-serif;">id</span>
<span class="t" style="left:1110.5px;top:1405.72px;font-size:20.4px;color:#008080;font-weight:normal;font-family:'Liberation Mono', monospace;transform:scaleY(1.09);transform-origin:0 16.98px;">92b82381-025c-4a64-815c-ba2e1bb08100</span>
<span class="t" style="left:914.5px;top:1448.67px;font-size:21.875px;color:#808080;font-weight:normal;font-family:'Liberation Sans', sans-serif;">log.message</span>
<span class="t" style="left:1110.5px;top:1451.82px;font-size:20.4px;color:#008080;font-weight:normal;font-family:'Liberation Mono', monospace;transform:scaleY(1.09);transform-origin:0 16.98px;">CONTAINER USER: 0</span>
<div class="a" style="left:902.4px;top:1485.1px;width:1458.0px;height:45.0px;background:#f5f5f5;"></div>
<span class="t" style="left:914.5px;top:1493.47px;font-size:21.875px;color:#808080;font-weight:normal;font-family:'Liberation Sans', sans-serif;">log.severity</span>
<span class="t" style="left:1110.5px;top:1496.62px;font-size:20.4px;color:#008080;font-weight:normal;font-family:'Liberation Mono', monospace;transform:scaleY(1.09);transform-origin:0 16.98px;">DEBUG</span>
<span class="t" style="left:914.5px;top:1538.88px;font-size:21.875px;color:#808080;font-weight:normal;font-family:'Liberation Sans', sans-serif;">name</span>
<span class="t" style="left:1110.5px;top:1542.02px;font-size:20.4px;color:#008080;font-weight:normal;font-family:'Liberation Mono', monospace;transform:scaleY(1.09);transform-origin:0 16.98px;">/runtime.v1.RuntimeService/CreateContainer</span>
<span class="t" style="left:900.2px;top:1598.35px;font-size:17.55px;color:#999;font-weight:normal;font-family:'Liberation Sans', sans-serif;">Log timestamps are relative to the start time of the full trace.</span>
<div class="a" style="left:0px;top:1681.6px;width:867.2px;height:43.75px;background:#f8f8f8;"></div>
<div class="a" style="left:867.2px;top:1681.6px;width:1528.8px;height:43.75px;background:#fff;"></div>
<div class="a" style="left:0px;top:1681.6px;width:1px;height:43.75px;background:#ccc;"></div>
<div class="a" style="left:37.150000000000006px;top:1681.6px;width:1.5625px;height:43.75px;background:#d3d3d3"></div>
<div class="a" style="left:74.60000000000001px;top:1681.6px;width:1.5625px;height:43.75px;background:#d3d3d3"></div>
<div class="a" style="left:112.05000000000001px;top:1681.6px;width:1.5625px;height:43.75px;background:#d3d3d3"></div>
<div class="a" style="left:145.25px;top:1688.3999999999999px;width:6px;height:31px;background:#f8dca1;"></div>
<span class="t" style="left:163.40px;top:1690.44px;font-size:23px;color:#000;font-family:'Liberation Sans', sans-serif">crio<span style="font-size:17.5px;color:#808080;margin-left:13.3px">github.com/cri-o/cri-o/server.addImageVolumes</span></span>
<div class="a" style="left:1249.4px;top:1681.6px;width:1.5px;height:43.75px;background:#d8d8d8;"></div>
<div class="a" style="left:1631.6px;top:1681.6px;width:1.5px;height:43.75px;background:#d8d8d8;"></div>
<div class="a" style="left:2013.8px;top:1681.6px;width:1.5px;height:43.75px;background:#d8d8d8;"></div>
<div class="a" style="left:867.2px;top:1681.6px;width:1px;height:43.75px;background:#ddd;"></div>
<div class="a" style="left:876px;top:1696.5px;width:3px;height:15.2px;background:#f8dca1;border-radius:1.5px;"></div>
<span class="t" style="left:888.6px;top:1694.52px;font-size:19px;color:#999;font-weight:normal;font-family:'Liberation Sans', sans-serif;">0&#956;s</span>
<div class="a" style="left:0px;top:1725.35px;width:867.2px;height:43.75px;background:#f8f8f8;"></div>
<div class="a" style="left:867.2px;top:1725.35px;width:1528.8px;height:43.75px;background:#fff;"></div>
<div class="a" style="left:0px;top:1725.35px;width:1px;height:43.75px;background:#ccc;"></div>
<div class="a" style="left:37.150000000000006px;top:1725.35px;width:1.5625px;height:43.75px;background:#d3d3d3"></div>
<div class="a" style="left:74.60000000000001px;top:1725.35px;width:1.5625px;height:43.75px;background:#d3d3d3"></div>
<svg class="a" style="left:75.0px;top:1725.35px;" width="30" height="40" viewBox="0 0 30 40"><path d="M9.1 19.4 L15.45 25.8 L21.8 19.4" fill="none" stroke="#000" stroke-width="1.35"/></svg>
<div class="a" style="left:107.80000000000001px;top:1732.1499999999999px;width:6px;height:31px;background:#f8dca1;"></div>
<span class="t" style="left:125.90px;top:1734.19px;font-size:23px;color:#000;font-family:'Liberation Sans', sans-serif">crio<span style="font-size:17.5px;color:#808080;margin-left:13.3px">github.com/cri-o/cri-o/server.(*Server).addContainer</span></span>
<div class="a" style="left:1249.4px;top:1725.35px;width:1.5px;height:43.75px;background:#d8d8d8;"></div>
<div class="a" style="left:1631.6px;top:1725.35px;width:1.5px;height:43.75px;background:#d8d8d8;"></div>
<div class="a" style="left:2013.8px;top:1725.35px;width:1.5px;height:43.75px;background:#d8d8d8;"></div>
<div class="a" style="left:867.2px;top:1725.35px;width:1px;height:43.75px;background:#ddd;"></div>
<div class="a" style="left:876px;top:1740.25px;width:3px;height:15.2px;background:#f8dca1;border-radius:1.5px;"></div>
<span class="t" style="left:888.6px;top:1738.27px;font-size:19px;color:#999;font-weight:normal;font-family:'Liberation Sans', sans-serif;">6&#956;s</span>
<div class="a" style="left:0px;top:1769.1px;width:867.2px;height:43.75px;background:#f8f8f8;"></div>
<div class="a" style="left:867.2px;top:1769.1px;width:1528.8px;height:43.75px;background:#fff;"></div>
<div class="a" style="left:0px;top:1769.1px;width:1px;height:43.75px;background:#ccc;"></div>
<div class="a" style="left:37.150000000000006px;top:1769.1px;width:1.5625px;height:43.75px;background:#d3d3d3"></div>
<div class="a" style="left:74.60000000000001px;top:1769.1px;width:1.5625px;height:43.75px;background:#d3d3d3"></div>
<div class="a" style="left:112.05000000000001px;top:1769.1px;width:1.5625px;height:43.75px;background:#d3d3d3"></div>
<svg class="a" style="left:112.5px;top:1769.1px;" width="30" height="40" viewBox="0 0 30 40"><path d="M9.1 19.4 L15.45 25.8 L21.8 19.4" fill="none" stroke="#000" stroke-width="1.35"/></svg>
<div class="a" style="left:145.25px;top:1775.8999999999999px;width:6px;height:31px;background:#f8dca1;"></div>
<span class="t" style="left:163.40px;top:1777.94px;font-size:23px;color:#000;font-family:'Liberation Sans', sans-serif">crio<span style="font-size:17.5px;color:#808080;margin-left:13.3px">github.com/cri-o/cri-o/internal/lib.(*ContainerServer).AddContainer</span></span>
<div class="a" style="left:1249.4px;top:1769.1px;width:1.5px;height:43.75px;background:#d8d8d8;"></div>
<div class="a" style="left:1631.6px;top:1769.1px;width:1.5px;height:43.75px;background:#d8d8d8;"></div>
<div class="a" style="left:2013.8px;top:1769.1px;width:1.5px;height:43.75px;background:#d8d8d8;"></div>
<div class="a" style="left:867.2px;top:1769.1px;width:1px;height:43.75px;background:#ddd;"></div>
<div class="a" style="left:876px;top:1784.0px;width:3px;height:15.2px;background:#f8dca1;border-radius:1.5px;"></div>
<span class="t" style="left:888.6px;top:1782.02px;font-size:19px;color:#999;font-weight:normal;font-family:'Liberation Sans', sans-serif;">3&#956;s</span>
<div class="a" style="left:0px;top:1812.85px;width:867.2px;height:43.75px;background:#f8f8f8;"></div>
<div class="a" style="left:867.2px;top:1812.85px;width:1528.8px;height:43.75px;background:#fff;"></div>
<div class="a" style="left:0px;top:1812.85px;width:1px;height:43.75px;background:#ccc;"></div>
<div class="a" style="left:37.150000000000006px;top:1812.85px;width:1.5625px;height:43.75px;background:#d3d3d3"></div>
<div class="a" style="left:74.60000000000001px;top:1812.85px;width:1.5625px;height:43.75px;background:#d3d3d3"></div>
<div class="a" style="left:112.05000000000001px;top:1812.85px;width:1.5625px;height:43.75px;background:#d3d3d3"></div>
<div class="a" style="left:149.5px;top:1812.85px;width:1.5625px;height:43.75px;background:#d3d3d3"></div>
<div class="a" style="left:182.70000000000002px;top:1819.6499999999999px;width:6px;height:31px;background:#f8dca1;"></div>
<span class="t" style="left:200.90px;top:1821.69px;font-size:23px;color:#000;font-family:'Liberation Sans', sans-serif">crio<span style="font-size:17.5px;color:#808080;margin-left:13.3px">github.com/cri-o/cri-o/internal/lib/sandbox.(*Sandbox).AddContainer</span></span>
<div class="a" style="left:1249.4px;top:1812.85px;width:1.5px;height:43.75px;background:#d8d8d8;"></div>
<div class="a" style="left:1631.6px;top:1812.85px;width:1.5px;height:43.75px;background:#d8d8d8;"></div>
<div class="a" style="left:2013.8px;top:1812.85px;width:1.5px;height:43.75px;background:#d8d8d8;"></div>
<div class="a" style="left:867.2px;top:1812.85px;width:1px;height:43.75px;background:#ddd;"></div>
<div class="a" style="left:876px;top:1827.75px;width:3px;height:15.2px;background:#f8dca1;border-radius:1.5px;"></div>
<span class="t" style="left:888.6px;top:1825.77px;font-size:19px;color:#999;font-weight:normal;font-family:'Liberation Sans', sans-serif;">0&#956;s</span>
<div class="a" style="left:0px;top:1856.6px;width:867.2px;height:43.75px;background:#f8f8f8;"></div>
<div class="a" style="left:867.2px;top:1856.6px;width:1528.8px;height:43.75px;background:#fff;"></div>
<div class="a" style="left:0px;top:1856.6px;width:1px;height:43.75px;background:#ccc;"></div>
<div class="a" style="left:37.150000000000006px;top:1856.6px;width:1.5625px;height:43.75px;background:#d3d3d3"></div>
<div class="a" style="left:74.60000000000001px;top:1856.6px;width:1.5625px;height:43.75px;background:#d3d3d3"></div>
<div class="a" style="left:107.80000000000001px;top:1863.3999999999999px;width:6px;height:31px;background:#f8dca1;"></div>
<span class="t" style="left:125.90px;top:1865.44px;font-size:23px;color:#000;font-family:'Liberation Sans', sans-serif">crio<span style="font-size:17.5px;color:#808080;margin-left:13.3px">github.com/cri-o/cri-o/server.(*Server).getSandboxIDMappings</span></span>
<div class="a" style="left:1249.4px;top:1856.6px;width:1.5px;height:43.75px;background:#d8d8d8;"></div>
<div class="a" style="left:1631.6px;top:1856.6px;width:1.5px;height:43.75px;background:#d8d8d8;"></div>
<div class="a" style="left:2013.8px;top:1856.6px;width:1.5px;height:43.75px;background:#d8d8d8;"></div>
<div class="a" style="left:867.2px;top:1856.6px;width:1px;height:43.75px;background:#ddd;"></div>
<div class="a" style="left:876px;top:1871.5px;width:3px;height:15.2px;background:#f8dca1;border-radius:1.5px;"></div>
<span class="t" style="left:888.6px;top:1869.52px;font-size:19px;color:#999;font-weight:normal;font-family:'Liberation Sans', sans-serif;">0&#956;s</span>
</body></html>
